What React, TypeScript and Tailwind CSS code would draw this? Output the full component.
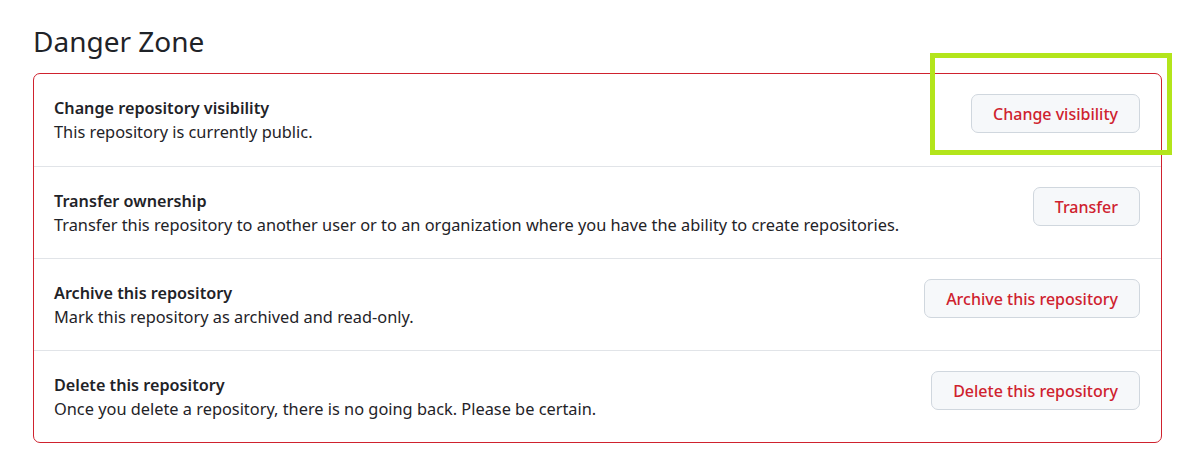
const rows = [
  {
    title: "Change repository visibility",
    desc: "This repository is currently public.",
    action: "Change visibility",
    highlight: true,
  },
  {
    title: "Transfer ownership",
    desc: "Transfer this repository to another user or to an organization where you have the ability to create repositories.",
    action: "Transfer",
  },
  {
    title: "Archive this repository",
    desc: "Mark this repository as archived and read-only.",
    action: "Archive this repository",
  },
  {
    title: "Delete this repository",
    desc: "Once you delete a repository, there is no going back. Please be certain.",
    action: "Delete this repository",
  },
];

export default function App() {
  return (
    <div
      className="min-h-screen bg-white pl-[33px] pr-[33px] pt-[21px] text-[#1f2328]"
      style={{ fontFamily: '"Noto Sans", "Open Sans", sans-serif' }}
    >
      <h2 className="text-[28px] leading-[40px] font-normal mb-[12px]">Danger Zone</h2>
      <div className="border border-[#cf222e] rounded-[7px]">
        {rows.map((row, i) => (
          <div
            key={row.title}
            className={
              "flex items-start justify-between pl-[20px] pr-[21px] h-[92px] " +
              (i > 0 ? "border-t border-[#e1e4e8]" : "")
            }
          >
            <div className="flex flex-col self-center">
              <span className="text-[16.2px] leading-[24px] font-semibold">{row.title}</span>
              <span className="text-[16.35px] leading-[24px]">{row.desc}</span>
            </div>
            <div className="relative mt-[20px]">
              <button className="h-[39px] px-[21px] rounded-[7px] border border-[#d0d7de] bg-[#f6f8fa] text-[#cf222e] text-[16px] font-medium">
                {row.action}
              </button>
              {row.highlight && (
                <div className="absolute left-[-41px] top-[-41px] w-[242px] h-[102px] border-[5px] border-[#b3e51b] pointer-events-none" />
              )}
            </div>
          </div>
        ))}
      </div>
    </div>
  );
}
